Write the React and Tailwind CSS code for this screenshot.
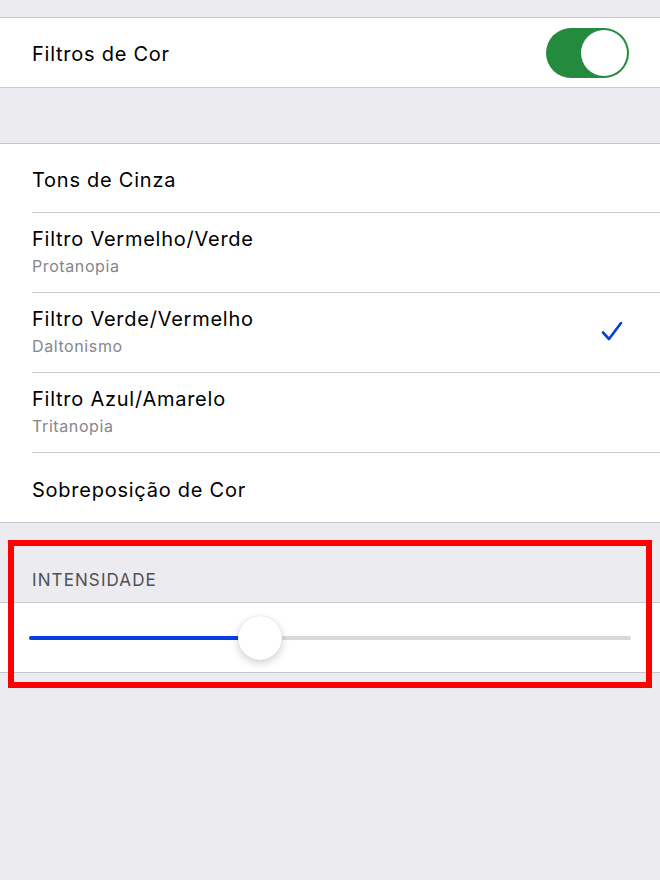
import React from 'react';

const font = { fontFamily: 'Inter, "Noto Sans", sans-serif' };

const Row = ({ title, subtitle, checked, last }) => (
  <div className="flex items-center pl-8">
    <div
      className={`flex flex-1 items-center pr-9 ${subtitle ? 'h-[80px]' : 'h-[69px]'} ${last ? '' : 'border-b border-[#c8c7cc]'}`}
    >
      <div className={`flex-1 ${subtitle ? '-mt-[2px]' : 'mt-1'}`}>
        <div className="text-[20px] leading-6 text-black tracking-[0.75px]">{title}</div>
        {subtitle && <div className="mt-[5px] text-[16px] leading-5 text-[#86868b] tracking-[0.6px]">{subtitle}</div>}
      </div>
      {checked && (
        <svg width="24" height="22" viewBox="0 0 24 22" className="-mt-1">
          <path d="M3 12.5 L9 19 L21 3" fill="none" stroke="#0a3ee0" strokeWidth="2.6" strokeLinecap="round" strokeLinejoin="round" />
        </svg>
      )}
    </div>
  </div>
);

const App = () => {
  return (
    <div className="relative h-[880px] w-[660px] bg-[#ebebf0] overflow-hidden" style={font}>
      <div className="h-[17px]" />

      {/* toggle */}
      <div className="flex h-[71px] items-center justify-between border-y border-[#c8c7cc] bg-white pl-8 pr-[31px]">
        <span className="mt-[2px] text-[20px] text-black tracking-[0.75px]">Filtros de Cor</span>
        <div className="flex h-[50px] w-[83px] items-center justify-end rounded-full bg-[#248a3d] p-[2px]">
          <div className="h-[46px] w-[46px] rounded-full bg-white" />
        </div>
      </div>

      <div className="h-[55px]" />

      {/* filters */}
      <div className="border-y border-[#c8c7cc] bg-white">
        <Row title="Tons de Cinza" />
        <Row title="Filtro Vermelho/Verde" subtitle="Protanopia" />
        <Row title="Filtro Verde/Vermelho" subtitle="Daltonismo" checked />
        <Row title="Filtro Azul/Amarelo" subtitle="Tritanopia" />
        <Row title="Sobreposição de Cor" last />
      </div>

      {/* intensity */}
      <div className="flex h-[79px] items-end pb-[9px] pl-8">
        <span className="text-[17px] uppercase text-[#505055] tracking-[1.1px]">Intensidade</span>
      </div>
      <div className="flex h-[71px] items-center border-y border-[#c8c7cc] bg-white px-[29px]">
        <div className="relative h-[4px] w-full rounded-full bg-[#d9d9dc]">
          <div className="h-full w-[231px] rounded-full bg-[#0a3ee0]" />
          <div className="absolute left-[209px] top-1/2 h-[44px] w-[44px] -translate-y-1/2 rounded-full bg-white shadow-[0_3px_8px_rgba(0,0,0,0.18),0_0_1px_rgba(0,0,0,0.2)]" />
        </div>
      </div>

      {/* annotation */}
      <div className="pointer-events-none absolute left-[8px] top-[540px] h-[148px] w-[644px] border-[6px] border-[#ff0000]" />
    </div>
  );
};

export default App;
